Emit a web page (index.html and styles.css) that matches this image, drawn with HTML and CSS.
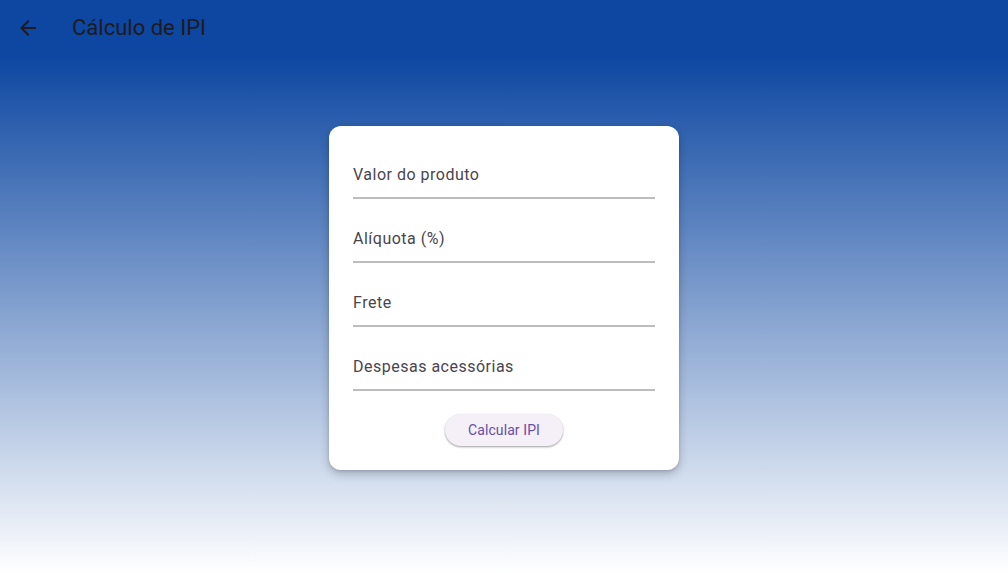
FILE: index.html
```html
<!DOCTYPE html>
<html lang="pt">
<head>
<meta charset="utf-8">
<title>Cálculo de IPI</title>
<link rel="stylesheet" href="styles.css">
</head>
<body>
<header class="appbar">
  <button class="back" aria-label="Voltar">
    <svg width="24" height="24" viewBox="0 0 24 24"><path d="M20 11H7.83l5.59-5.59L12 4l-8 8 8 8 1.41-1.41L7.83 13H20v-2z" fill="#1d1b20"/></svg>
  </button>
  <h1 class="title">Cálculo de IPI</h1>
</header>
<main class="body">
  <div class="card">
    <div class="field"><span class="label">Valor do produto</span></div>
    <div class="field"><span class="label">Alíquota (%)</span></div>
    <div class="field"><span class="label">Frete</span></div>
    <div class="field"><span class="label">Despesas acessórias</span></div>
    <div class="actions"><button class="btn">Calcular IPI</button></div>
  </div>
</main>
</body>
</html>
```
FILE: styles.css
```css
html, body {
  margin: 0;
  padding: 0;
  height: 100%;
}
body {
  font-family: Roboto, "Noto Sans", sans-serif;
  display: flex;
  flex-direction: column;
  overflow: hidden;
}
.appbar {
  height: 56px;
  flex: 0 0 56px;
  background: #0D47A1;
  display: flex;
  align-items: center;
  padding-left: 16px;
}
.back {
  width: 24px;
  height: 24px;
  padding: 0;
  border: 0;
  background: none;
  display: flex;
}
.title {
  margin: 0 0 0 32px;
  font-size: 22px;
  font-weight: 400;
  color: #1d1b20;
  line-height: 28px;
}
.body {
  flex: 1;
  background: linear-gradient(to bottom, #0D47A1 0%, #ffffff 100%);
  display: flex;
  justify-content: center;
  align-items: flex-start;
  padding-top: 70px;
}
.card {
  width: 302px;
  background: #fff;
  border-radius: 12px;
  padding: 25px 24px 24px;
  box-shadow: 0 4px 10px rgba(0, 0, 0, 0.22), 0 1px 3px rgba(0, 0, 0, 0.12);
  display: flex;
  flex-direction: column;
  gap: 16px;
}
.field {
  height: 44px;
  padding-top: 2px;
  border-bottom: 2px solid #bcbbc0;
  display: flex;
  align-items: center;
}
.label {
  font-size: 16px;
  color: #49454f;
  letter-spacing: 0.5px;
  line-height: 24px;
}
.actions {
  display: flex;
  justify-content: center;
  margin-top: 7px;
}
.btn {
  height: 32px;
  padding: 0 23px;
  border: 0;
  border-radius: 16px;
  background: #f5eff7;
  color: #6750a4;
  font-family: Roboto, sans-serif;
  font-size: 14px;
  font-weight: 400;
  letter-spacing: 0.1px;
  box-shadow: 0 1px 2px rgba(0, 0, 0, 0.3), 0 1px 3px rgba(0, 0, 0, 0.1);
}
```
